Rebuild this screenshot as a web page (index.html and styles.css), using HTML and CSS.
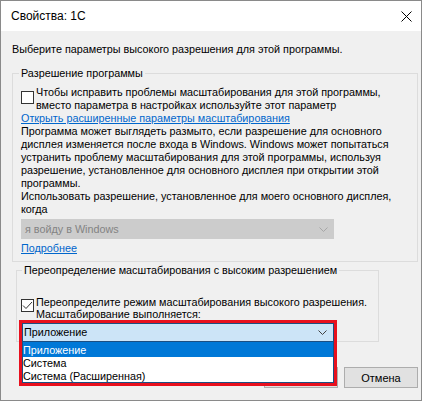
FILE: index.html
```html
<!DOCTYPE html>
<html lang="ru">
<head>
  <meta charset="UTF-8" />
  <title>Свойства: 1С</title>
  <link rel="stylesheet" href="styles.css">
</head>
<body>
  <div class="dialog">
    <div class="titlebar">
      <span class="title">Свойства: 1С</span>
      <svg class="close" width="11" height="11" viewBox="0 0 11 11">
        <path d="M0.5 0.5 L10.5 10.5 M10.5 0.5 L0.5 10.5" stroke="#000" stroke-width="1" fill="none" />
      </svg>
    </div>

    <div class="content">
      <p class="intro">Выберите параметры высокого разрешения для этой программы.</p>

      <fieldset class="group group-app">
        <legend>Разрешение программы</legend>
        <div class="check">
          <span class="box"></span>
          <span class="check-text">Чтобы исправить проблемы масштабирования для этой программы,<br>вместо параметра в настройках используйте этот параметр</span>
        </div>
        <a class="link" href="#">Открыть расширенные параметры масштабирования</a>
        <p class="lines">Программа может выглядеть размыто, если разрешение для основного<br>дисплея изменяется после входа в Windows. Windows может попытаться<br>устранить проблему масштабирования для этой программы, используя<br>разрешение, установленное для основного дисплея при открытии этой<br>программы.</p>
        <p class="lines">Использовать разрешение, установленное для моего основного дисплея,<br>когда</p>
        <div class="combo combo-disabled">
          <span>я войду в Windows</span>
          <svg class="chevron" width="9" height="5" viewBox="0 0 9 5">
            <path d="M0.5 0.5 L4.5 4.5 L8.5 0.5" stroke="#a6a6a6" fill="none" />
          </svg>
        </div>
        <a class="link more" href="#">Подробнее</a>
      </fieldset>

      <fieldset class="group group-override">
        <legend>Переопределение масштабирования с высоким разрешением</legend>
        <div class="check check-on">
          <span class="box">
            <svg width="11" height="11" viewBox="0 0 11 11">
              <path d="M1 5.5 L4 8.5 L10 2" stroke="#333" stroke-width="1" fill="none" />
            </svg>
          </span>
          <span class="check-text">Переопределите режим масштабирования высокого разрешения.<br>Масштабирование выполняется:</span>
        </div>
        <div class="combo-slot">
          <div class="popup">
            <div class="combo combo-open">
              <span>Приложение</span>
              <svg class="chevron" width="9" height="5" viewBox="0 0 9 5">
                <path d="M0.5 0.5 L4.5 4.5 L8.5 0.5" stroke="#404040" fill="none" />
              </svg>
            </div>
            <ul class="options">
              <li class="selected">Приложение</li>
              <li>Система</li>
              <li>Система (Расширенная)</li>
            </ul>
          </div>
        </div>
      </fieldset>

      <div class="buttons">
        <button type="button">OK</button>
        <button type="button">Отмена</button>
      </div>
    </div>
  </div>
</body>
</html>
```

FILE: styles.css
```css
* { box-sizing: border-box; margin: 0; padding: 0; }
body {
  font-family: "Liberation Sans", Arial, sans-serif;
  font-size: 10.8px;
  line-height: 13px;
  color: #000;
  background: #fff;
}
.dialog {
  width: 422px;
  height: 401px;
  border: 1px solid #8a8a8a;
  display: flex;
  flex-direction: column;
}
.titlebar {
  height: 30px;
  background: #fff;
  display: flex;
  align-items: center;
  padding-left: 10px;
}
.title { font-size: 12px; }
.close {
  margin-left: auto;
  margin-right: 9px;
}
.content {
  flex: 1;
  background: #f0f0f0;
  padding: 12px 3px 0 11px;
}
.intro { white-space: nowrap; }

.group {
  border: 1px solid #dcdcdc;
  padding: 6px 8px 6px 8px;
}
.group legend {
  padding: 0 2px;
  white-space: nowrap;
}
.group-app {
  margin-top: 11px;
}
.group-app legend { margin-left: -2px; }
.group-override {
  margin: 2px 0 0 4px;
  width: 363px;
  padding: 19px 4px 0 4px;
}
.group-override legend { margin-left: 1px; }

.check {
  display: flex;
  align-items: flex-start;
  gap: 2px;
}
.check .box {
  flex: none;
  width: 13px;
  height: 13px;
  margin-top: 5px;
  border: 1px solid #333;
  background: #fff;
  display: flex;
  align-items: center;
  justify-content: center;
}
.check-text { white-space: nowrap; }
.check-on .box { margin-top: 3px; }
.check-on .check-text { line-height: 12px; }

.link {
  display: block;
  color: #0066cc;
  text-decoration: underline;
  white-space: nowrap;
}
.link.more {
  display: inline-block;
  margin-top: 3px;
}
.lines { white-space: nowrap; }

.combo {
  display: flex;
  align-items: center;
  justify-content: space-between;
  white-space: nowrap;
}
.combo-disabled {
  margin-top: 3px;
  width: 313px;
  height: 20px;
  background: #cccccc;
  border: 1px solid #cccccc;
  color: #838383;
  padding: 0 4px 0 3px;
}
.chevron { margin-right: 1px; }

.combo-slot {
  position: relative;
  margin: 3px 0 0 1px;
  width: 312px;
  height: 18px;
}
.popup {
  position: absolute;
  top: -3px;
  left: -3px;
  width: 318px;
  height: 66px;
  border: 3px solid #e8101e;
  background: #fff;
  z-index: 2;
}
.combo-open {
  height: 19px;
  background: #cce4f7;
  border: 1px solid #1b4f82;
  padding: 0 5px 0 1px;
}
.options {
  list-style: none;
  border: 1px solid #1b4f82;
  border-top: none;
  height: 41px;
  overflow: hidden;
}
.options li {
  height: 13px;
  line-height: 13px;
  white-space: nowrap;
}
.options li.selected {
  height: 15px;
  line-height: 16px;
  background: #0078d7;
  color: #fff;
}

.buttons {
  display: flex;
  justify-content: flex-end;
  gap: 6px;
  margin-top: 25px;
}
.buttons button {
  width: 74px;
  height: 21px;
  font-family: inherit;
  font-size: 11px;
  color: #000;
  background: #e1e1e1;
  border: 1px solid #adadad;
}
```
